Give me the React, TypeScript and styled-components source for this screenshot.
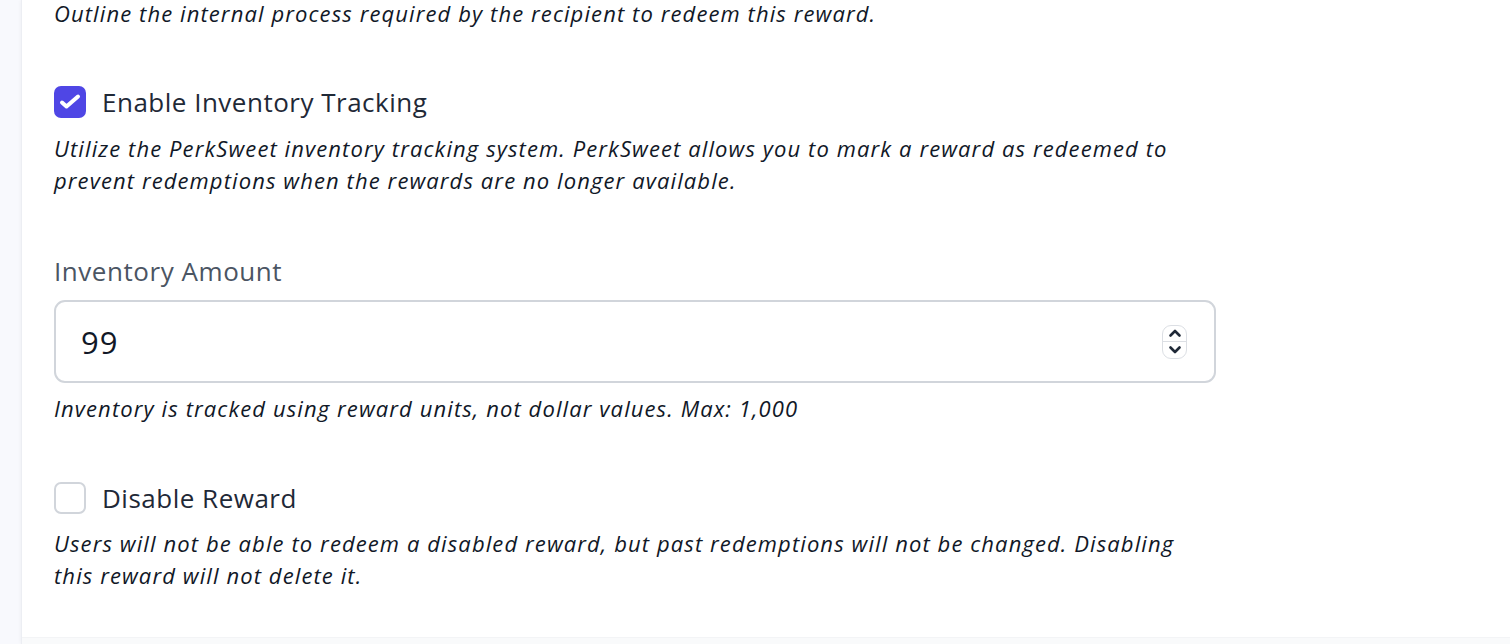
import React from "react";
import styled, { createGlobalStyle } from "styled-components";

const Global = createGlobalStyle`
  html, body { margin: 0; padding: 0; background: #f8f9fd; }
  body { font-family: "Open Sans", "Noto Sans", sans-serif; overflow: hidden; }
  * { box-sizing: border-box; }
`;

const Shell = styled.div`
  display: flex;
  height: 644px;
  background: #f8f9fd;
`;

const Gutter = styled.div`
  width: 21px;
  flex: none;
`;

const Panel = styled.main`
  flex: 1;
  display: flex;
  flex-direction: column;
  background: #ffffff;
  border-left: 1px solid #eceef3;
  box-shadow: -1px 0 3px rgba(0, 0, 0, 0.03);
`;

const Form = styled.div`
  flex: 1;
  padding: 0 0 0 32px;
  width: 1194px;
  display: flex;
  flex-direction: column;
`;

const Footer = styled.div`
  height: 7px;
  flex: none;
  background: #f9fafb;
  border-top: 1px solid #f3f4f6;
`;

const Help = styled.p<{ $top?: number }>`
  margin: ${(p) => p.$top ?? 0}px 0 0;
  font-size: 22px;
  line-height: 32px;
  letter-spacing: 1.1px;
  font-style: italic;
  color: #111827;
  max-width: 1138px;
`;

const CheckRow = styled.label<{ $top: number }>`
  display: flex;
  align-items: center;
  gap: 16px;
  margin-top: ${(p) => p.$top}px;
  cursor: pointer;
`;

const Box = styled.span<{ $checked?: boolean }>`
  width: 32px;
  height: 32px;
  flex: none;
  border-radius: 7px;
  display: flex;
  align-items: center;
  justify-content: center;
  background: ${(p) => (p.$checked ? "#4f46e5" : "#ffffff")};
  border: ${(p) => (p.$checked ? "none" : "2px solid #d1d5db")};
`;

const CheckLabel = styled.span`
  font-size: 26px;
  line-height: 32px;
  letter-spacing: 0.5px;
  color: #1f2937;
`;

const FieldLabel = styled.div`
  margin-top: 59px;
  font-size: 26px;
  line-height: 32px;
  letter-spacing: 0.55px;
  color: #4b5563;
`;

const InputWrap = styled.div`
  margin-top: 13px;
  height: 83px;
  width: 1162px;
  display: flex;
  align-items: center;
  border: 2px solid #d1d5db;
  border-radius: 11px;
  padding: 0 27px 0 25px;
  background: #fff;
`;

const NumberText = styled.input`
  flex: 1;
  border: none;
  outline: none;
  background: transparent;
  font-family: inherit;
  font-size: 31px;
  letter-spacing: 1px;
  color: #111827;
  padding: 0;
`;

const Spinner = styled.div`
  width: 25px;
  height: 34px;
  border: 1px solid #dcdfe4;
  border-radius: 9px;
  display: flex;
  flex-direction: column;
  overflow: hidden;
`;

const SpinHalf = styled.div<{ $bottom?: boolean }>`
  flex: 1;
  display: flex;
  align-items: center;
  justify-content: center;
  border-top: ${(p) => (p.$bottom ? "1px solid #dcdfe4" : "none")};
`;

const Check = () => (
  <svg width="32" height="32" viewBox="0 0 32 32" fill="none">
    <path d="M8 16.5l4.5 4L24 10.5" stroke="#fff" strokeWidth="4" strokeLinecap="round" strokeLinejoin="round" />
  </svg>
);

const Chevron = ({ up }: { up?: boolean }) => (
  <svg width="14" height="10" viewBox="0 0 14 10" fill="none">
    <path
      d={up ? "M2.5 7.5L7 3l4.5 4.5" : "M2.5 2.5L7 7l4.5-4.5"}
      stroke="#1f2937"
      strokeWidth="2.6"
      strokeLinecap="round"
      strokeLinejoin="round"
    />
  </svg>
);

export default function App() {
  return (
    <>
      <Global />
      <Shell>
        <Gutter />
        <Panel>
          <Form>
            <Help $top={-3}>Outline the internal process required by the recipient to redeem this reward.</Help>
            <CheckRow $top={57}>
              <Box $checked>
                <Check />
              </Box>
              <CheckLabel>Enable Inventory Tracking</CheckLabel>
            </CheckRow>
            <Help $top={14}>
              Utilize the PerkSweet inventory tracking system. PerkSweet allows you to mark a reward as redeemed to
              prevent redemptions when the rewards are no longer available.
            </Help>
            <FieldLabel>Inventory Amount</FieldLabel>
            <InputWrap>
              <NumberText type="text" value="99" readOnly />
              <Spinner>
                <SpinHalf>
                  <Chevron up />
                </SpinHalf>
                <SpinHalf $bottom>
                  <Chevron />
                </SpinHalf>
              </Spinner>
            </InputWrap>
            <Help $top={9}>Inventory is tracked using reward units, not dollar values. Max: 1,000</Help>
            <CheckRow $top={58}>
              <Box />
              <CheckLabel>Disable Reward</CheckLabel>
            </CheckRow>
            <Help $top={13}>
              Users will not be able to redeem a disabled reward, but past redemptions will not be changed. Disabling
              this reward will not delete it.
            </Help>
          </Form>
          <Footer />
        </Panel>
      </Shell>
    </>
  );
}
